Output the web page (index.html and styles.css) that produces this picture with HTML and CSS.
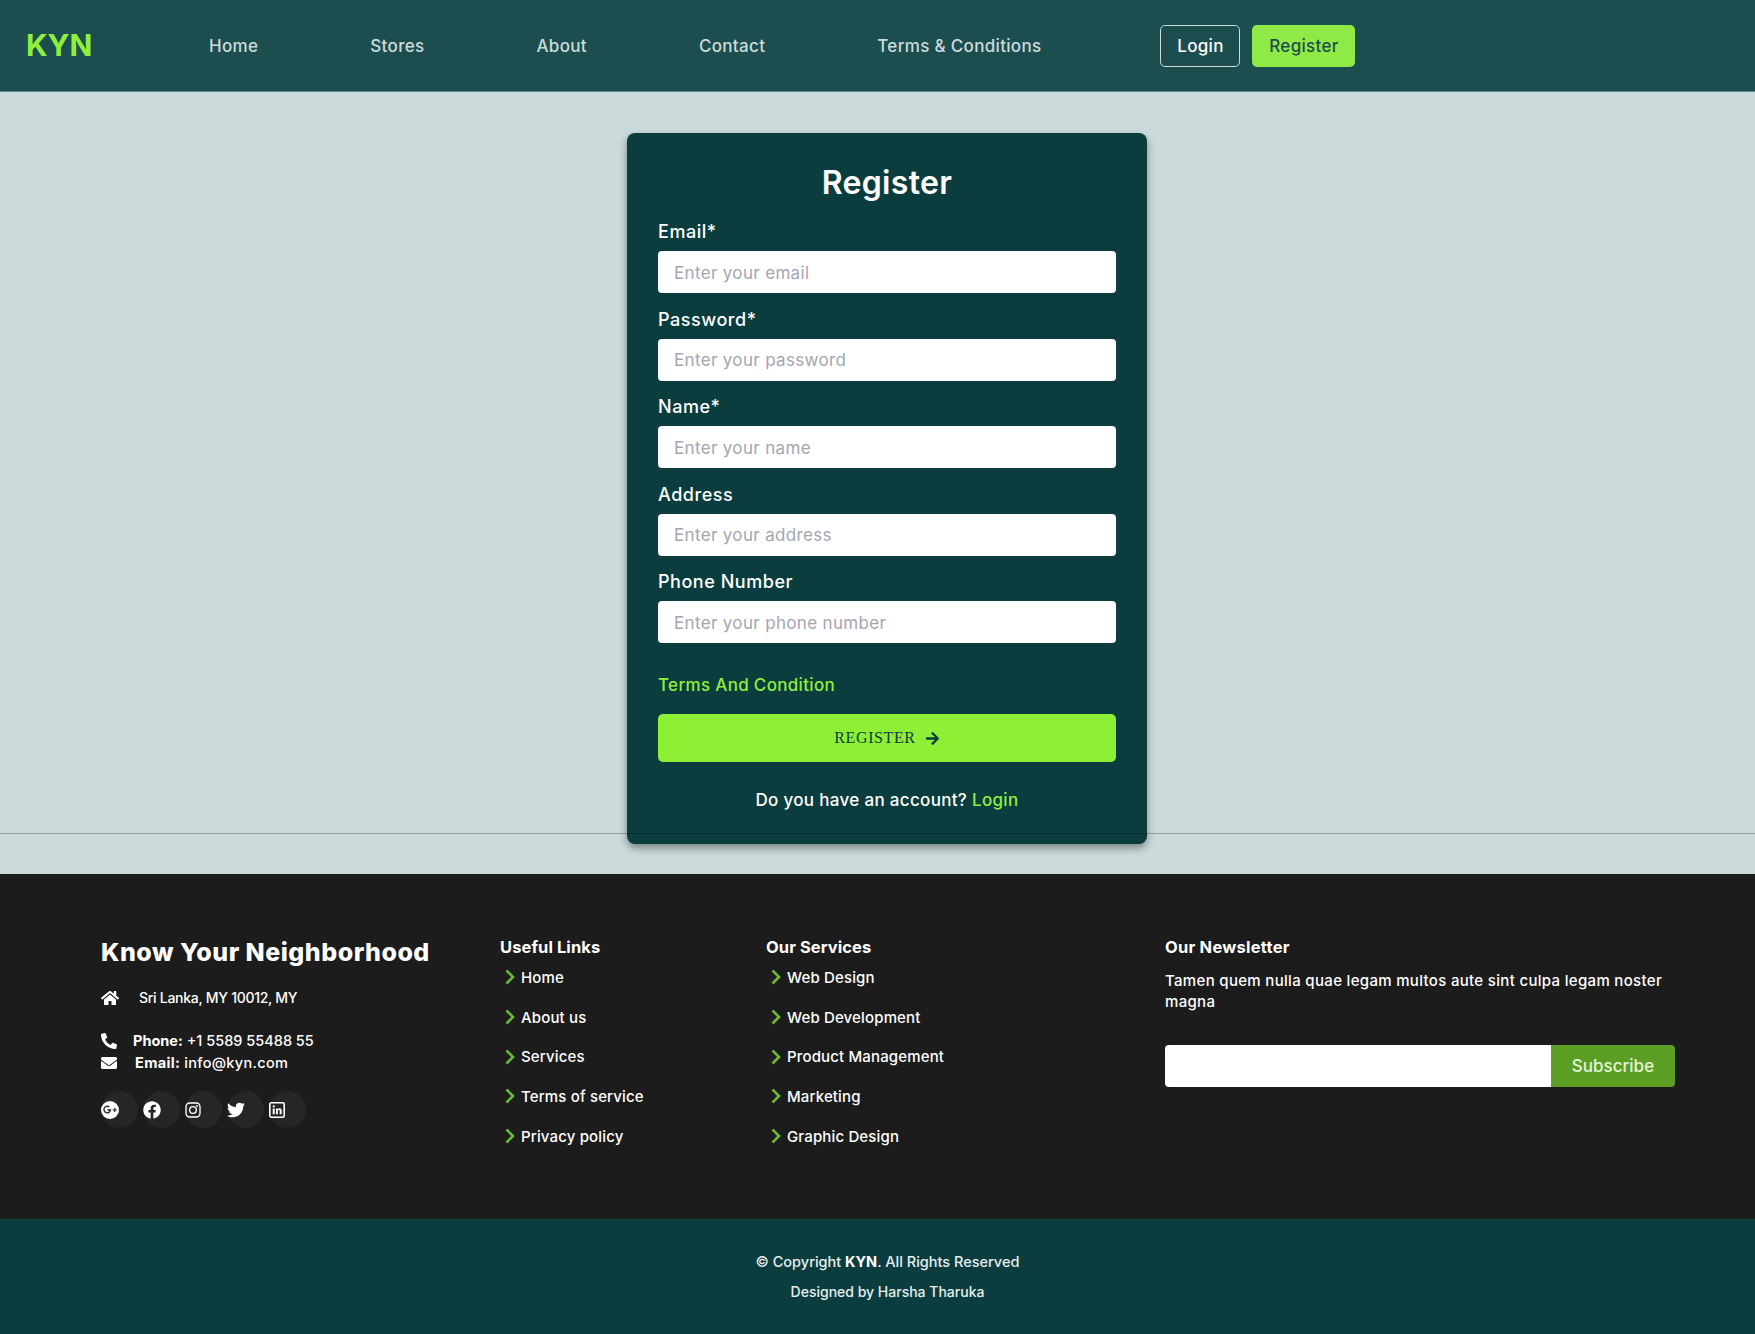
FILE: index.html

```html
<!DOCTYPE html>
<html lang="en">
<head>
  <meta charset="UTF-8" />
  <title>KYN - Register</title>
  <link rel="stylesheet" href="styles.css">
</head>
<body>
  <header class="navbar">
    <a class="logo" href="#">KYN</a>
    <ul class="nav-links">
      <li><a href="#">Home</a></li>
      <li><a href="#">Stores</a></li>
      <li><a href="#">About</a></li>
      <li><a href="#">Contact</a></li>
      <li><a href="#">Terms &amp; Conditions</a></li>
    </ul>
    <div class="nav-buttons">
      <a class="btn-login" href="#">Login</a>
      <a class="btn-register" href="#">Register</a>
    </div>
  </header>

  <main class="page">
    <form class="card">
      <h1>Register</h1>
      <div class="field">
        <label>Email*</label>
        <input type="text" placeholder="Enter your email" />
      </div>
      <div class="field">
        <label>Password*</label>
        <input type="text" placeholder="Enter your password" />
      </div>
      <div class="field">
        <label>Name*</label>
        <input type="text" placeholder="Enter your name" />
      </div>
      <div class="field">
        <label>Address</label>
        <input type="text" placeholder="Enter your address" />
      </div>
      <div class="field">
        <label>Phone Number</label>
        <input type="text" placeholder="Enter your phone number" />
      </div>
      <a class="terms" href="#">Terms And Condition</a>
      <button class="submit" type="button">REGISTER
        <svg class="arrow" viewBox="0 0 448 512"><path d="M190.5 66.9l22.2-22.2c9.4-9.4 24.6-9.4 33.9 0L441 239c9.4 9.4 9.4 24.6 0 33.9L246.6 467.3c-9.4 9.4-24.6 9.4-33.9 0l-22.2-22.2c-9.5-9.5-9.3-25 .4-34.3L311.4 296H24c-13.3 0-24-10.7-24-24v-32c0-13.3 10.7-24 24-24h287.4L190.9 101.2c-9.8-9.3-10-24.8-.4-34.3z"/></svg>
      </button>
      <p class="have-account">Do you have an account? <a href="#">Login</a></p>
    </form>
    <hr class="divider">
  </main>

  <footer class="footer">
    <div class="footer-grid">
      <div class="contact">
        <h3>Know Your Neighborhood</h3>
        <p class="address">
          <svg class="home-icon" viewBox="0 0 576 512"><path d="M280.37 148.26L96 300.11V464a16 16 0 0 0 16 16l112.06-.29a16 16 0 0 0 15.92-16V368a16 16 0 0 1 16-16h64a16 16 0 0 1 16 16v95.64a16 16 0 0 0 16 16.05L464 480a16 16 0 0 0 16-16V300L295.67 148.26a12.19 12.19 0 0 0-15.3 0zM571.6 251.47L488 182.56V44.05a12 12 0 0 0-12-12h-56a12 12 0 0 0-12 12v72.61L318.47 43a48 48 0 0 0-61 0L4.34 251.47a12 12 0 0 0-1.6 16.9l25.5 31A12 12 0 0 0 45.15 301l235.22-193.74a12.19 12.19 0 0 1 15.3 0L530.9 301a12 12 0 0 0 16.9-1.6l25.5-31a12 12 0 0 0-1.7-16.93z"/></svg>
          Sri Lanka, MY 10012, MY
        </p>
        <p class="phone">
          <svg class="line-icon" viewBox="0 0 512 512"><path d="M497.39 361.8l-112-48a24 24 0 0 0-28 6.9l-49.6 60.6A370.66 370.66 0 0 1 130.6 204.11l60.6-49.6a23.94 23.94 0 0 0 6.9-28l-48-112A24.16 24.16 0 0 0 122.6.61l-104 24A24 24 0 0 0 0 48c0 256.5 207.9 464 464 464a24 24 0 0 0 23.4-18.6l24-104a24.29 24.29 0 0 0-14.01-27.6z"/></svg>
          <span><b>Phone:</b> +1 5589 55488 55</span>
        </p>
        <p class="email">
          <svg class="line-icon" viewBox="0 0 512 512"><path d="M502.3 190.8c3.9-3.1 9.7-.2 9.7 4.7V400c0 26.5-21.5 48-48 48H48c-26.5 0-48-21.5-48-48V195.6c0-5 5.7-7.8 9.7-4.7 22.4 17.4 52.1 39.5 154.1 113.6 21.1 15.4 56.7 47.8 92.2 47.6 35.7.3 72-32.8 92.3-47.6 102-74.1 131.6-96.3 154-113.7zM256 320c23.2.4 56.6-29.2 73.4-41.4 132.7-96.3 142.8-104.7 173.4-128.7 5.8-4.5 9.2-11.5 9.2-18.9v-19c0-26.5-21.5-48-48-48H48C21.5 64 0 85.5 0 112v19c0 7.4 3.4 14.3 9.2 18.9 30.6 23.9 40.7 32.4 173.4 128.7 16.8 12.2 50.2 41.8 73.4 41.4z"/></svg>
          <span><b>Email:</b> info@kyn.com</span>
        </p>
        <div class="socials">
          <a href="#"><svg viewBox="0 0 24 24"><circle cx="12" cy="12" r="12" fill="#fff"/><path d="M11 7.9A4.4 4.4 0 1 0 12.7 12H8.6" fill="none" stroke="#262626" stroke-width="1.8"/><path d="M15.6 12h5.4M18.3 9.3v5.4" fill="none" stroke="#262626" stroke-width="1.6"/></svg></a>
          <a href="#"><svg viewBox="0 0 512 512"><path fill="#fff" d="M504 256C504 119 393 8 256 8S8 119 8 256c0 123.78 90.69 226.38 209.25 245V327.69h-63V256h63v-54.64c0-62.15 37-96.48 93.67-96.48 27.14 0 55.52 4.84 55.52 4.84v61h-31.28c-30.8 0-40.41 19.12-40.41 38.73V256h68.78l-11 71.69h-57.78V501C413.31 482.38 504 379.78 504 256z"/></svg></a>
          <a href="#"><svg class="small" viewBox="0 0 24 24"><rect x="1.5" y="1.5" width="21" height="21" rx="5.5" fill="none" stroke="#fff" stroke-width="2"/><circle cx="12" cy="12" r="5" fill="none" stroke="#fff" stroke-width="2"/><circle cx="18" cy="6" r="1.4" fill="#fff"/></svg></a>
          <a href="#"><svg viewBox="0 0 512 512"><path fill="#fff" d="M459.37 151.716c.325 4.548.325 9.097.325 13.645 0 138.72-105.583 298.558-298.558 298.558-59.452 0-114.68-17.219-161.137-47.106 8.447.974 16.568 1.299 25.34 1.299 49.055 0 94.213-16.568 130.274-44.832-46.132-.975-84.792-31.188-98.112-72.772 6.498.974 12.995 1.624 19.818 1.624 9.421 0 18.843-1.3 27.614-3.573-48.081-9.747-84.143-51.98-84.143-102.985v-1.299c13.969 7.797 30.214 12.67 47.431 13.319-28.264-18.843-46.781-51.005-46.781-87.391 0-19.492 5.197-37.36 14.294-52.954 51.655 63.675 129.3 105.258 216.365 109.807-1.624-7.797-2.599-15.918-2.599-24.04 0-57.828 46.782-104.934 104.934-104.934 30.213 0 57.502 12.67 76.67 33.137 23.715-4.548 46.456-13.32 66.599-25.34-7.798 24.366-24.366 44.833-46.132 57.827 21.117-2.273 41.584-8.122 60.426-16.243-14.292 20.791-32.161 39.308-52.628 54.253z"/></svg></a>
          <a href="#"><svg class="small" viewBox="0 0 24 24"><rect x="1.2" y="1.2" width="21.6" height="21.6" rx="2.2" fill="none" stroke="#fff" stroke-width="2.4"/><path fill="#fff" d="M5.6 9.6h3v8.8h-3zM7.1 5a1.7 1.7 0 1 1 0 3.4 1.7 1.7 0 0 1 0-3.4zM10.4 9.6h2.8v1.2c.6-.9 1.5-1.4 2.8-1.4 2.2 0 3 1.4 3 3.8v5.2h-3v-4.6c0-1.2-.4-1.9-1.3-1.9-1.1 0-1.4.8-1.4 2v4.5h-2.9z"/></svg></a>
        </div>
      </div>

      <div class="link-col">
        <h4>Useful Links</h4>
        <ul>
          <li><svg class="chev" viewBox="0 0 10 16"><path d="M1.5 1.5L8 8l-6.5 6.5"/></svg><a href="#">Home</a></li>
          <li><svg class="chev" viewBox="0 0 10 16"><path d="M1.5 1.5L8 8l-6.5 6.5"/></svg><a href="#">About us</a></li>
          <li><svg class="chev" viewBox="0 0 10 16"><path d="M1.5 1.5L8 8l-6.5 6.5"/></svg><a href="#">Services</a></li>
          <li><svg class="chev" viewBox="0 0 10 16"><path d="M1.5 1.5L8 8l-6.5 6.5"/></svg><a href="#">Terms of service</a></li>
          <li><svg class="chev" viewBox="0 0 10 16"><path d="M1.5 1.5L8 8l-6.5 6.5"/></svg><a href="#">Privacy policy</a></li>
        </ul>
      </div>

      <div class="link-col">
        <h4>Our Services</h4>
        <ul>
          <li><svg class="chev" viewBox="0 0 10 16"><path d="M1.5 1.5L8 8l-6.5 6.5"/></svg><a href="#">Web Design</a></li>
          <li><svg class="chev" viewBox="0 0 10 16"><path d="M1.5 1.5L8 8l-6.5 6.5"/></svg><a href="#">Web Development</a></li>
          <li><svg class="chev" viewBox="0 0 10 16"><path d="M1.5 1.5L8 8l-6.5 6.5"/></svg><a href="#">Product Management</a></li>
          <li><svg class="chev" viewBox="0 0 10 16"><path d="M1.5 1.5L8 8l-6.5 6.5"/></svg><a href="#">Marketing</a></li>
          <li><svg class="chev" viewBox="0 0 10 16"><path d="M1.5 1.5L8 8l-6.5 6.5"/></svg><a href="#">Graphic Design</a></li>
        </ul>
      </div>

      <div class="newsletter">
        <h4>Our Newsletter</h4>
        <p>Tamen quem nulla quae legam multos aute sint culpa legam noster magna</p>
        <div class="subscribe">
          <input type="text" />
          <button type="button">Subscribe</button>
        </div>
      </div>
    </div>
  </footer>

  <div class="copyright">
    <p class="copy-line">&copy; Copyright <b>KYN</b>. All Rights Reserved</p>
    <p class="credit">Designed by Harsha Tharuka</p>
  </div>
</body>
</html>
```

FILE: styles.css

```css
* {
  box-sizing: border-box;
}
body {
  margin: 0;
  font-family: Inter, "Noto Sans", sans-serif;
  letter-spacing: 0.02em;
  background-color: #cbdbdb;
  color: #fff;
}
a {
  text-decoration: none;
  color: inherit;
}
p, h1, h3, h4, ul {
  margin: 0;
  padding: 0;
}
ul {
  list-style: none;
}

/* navbar */
.navbar {
  display: flex;
  align-items: center;
  height: 92px;
  padding-left: 26px;
  background-color: #1d4e4f;
  border-bottom: 1px solid #5d8a8a;
}
.logo {
  width: 65px;
  margin-bottom: 2px;
  font-size: 30px;
  font-weight: 700;
  letter-spacing: 0;
  color: #8ef03a;
}
.nav-links {
  display: flex;
  gap: 112px;
  margin-left: 118px;
  font-size: 17px;
  font-weight: 500;
  color: #cbdbdb;
}
.nav-buttons {
  display: flex;
  gap: 12px;
  margin-left: 119px;
  font-size: 17px;
  font-weight: 500;
}
.btn-login, .btn-register {
  display: flex;
  align-items: center;
  justify-content: center;
  height: 42px;
  border-radius: 5px;
}
.btn-login {
  width: 80px;
  border: 1px solid #cbdbdb;
}
.btn-register {
  width: 103px;
  background-color: #90ea45;
  color: #1d4e4f;
}

/* register card */
.page {
  padding-top: 41px;
  padding-left: 19px;
  height: 782px;
}
.card {
  width: 520px;
  height: 711px;
  margin: 0 auto -11px;
  padding: 31px;
  border-radius: 8px;
  background-color: #0b3d3f;
  box-shadow: 0 4px 8px rgba(0, 0, 0, 0.4);
}
.card h1 {
  height: 38px;
  margin-bottom: 18px;
  font-size: 32px;
  line-height: 38px;
  font-weight: 600;
  text-align: center;
}
.field {
  margin-bottom: 14.5px;
}
.field label {
  display: block;
  height: 24px;
  margin-bottom: 7px;
  font-size: 18px;
  line-height: 24px;
  font-weight: 500;
  letter-spacing: 0.03em;
}
.field input {
  display: block;
  width: 100%;
  height: 42px;
  padding: 1px 16px 0;
  border: 0;
  border-radius: 4px;
  background-color: #fff;
  font-family: inherit;
  font-size: 17px;
  letter-spacing: 0.02em;
}
.field input::placeholder {
  color: #a5a5b2;
}
.terms {
  display: block;
  margin-top: 30px;
  font-size: 17px;
  line-height: 24px;
  font-weight: 500;
  color: #8ef03a;
}
.submit {
  display: flex;
  align-items: center;
  justify-content: center;
  gap: 9px;
  width: 100%;
  height: 48px;
  margin-top: 17px;
  border: 0;
  border-radius: 5px;
  background-color: #8ef035;
  color: #0b3d3f;
  font-family: "Liberation Serif", serif;
  font-size: 16px;
  letter-spacing: 0.038em;
}
.arrow {
  width: 15px;
  height: 15px;
  fill: #0b3d3f;
}
.have-account {
  margin-top: 26px;
  font-size: 17px;
  line-height: 24px;
  font-weight: 500;
  text-align: center;
}
.have-account a {
  color: #8ef03a;
}
.divider {
  margin: 0 0 0 -19px;
  border: 0;
  border-top: 1px solid rgba(0, 0, 0, 0.25);
}

/* footer */
.footer {
  height: 345px;
  padding: 58px 80px 0 101px;
  background-color: #1c1c1c;
}
.footer-grid {
  display: grid;
  grid-template-columns: 399px 266px 399px 1fr;
  align-items: start;
}
.contact h3 {
  font-size: 25px;
  line-height: 40px;
  font-weight: 800;
  letter-spacing: 0.02em;
}
.address, .phone, .email {
  display: flex;
  align-items: center;
  font-size: 14.5px;
  font-weight: 500;
}
.address {
  margin-top: 14px;
  line-height: 24px;
  font-size: 14px;
  letter-spacing: -0.02em;
}
.home-icon {
  width: 18px;
  height: 16px;
  margin-right: 20px;
  fill: #fff;
}
.phone {
  margin-top: 20px;
  line-height: 22px;
  letter-spacing: 0;
}
.email {
  line-height: 22px;
}
.line-icon {
  width: 16px;
  height: 16px;
  fill: #fff;
}
.phone .line-icon {
  margin-right: 16px;
}
.email .line-icon {
  margin-right: 18px;
}
.contact b {
  font-weight: 700;
}
.socials {
  display: flex;
  gap: 5px;
  margin-top: 17px;
}
.socials a {
  display: flex;
  align-items: center;
  width: 37px;
  height: 37px;
  border-radius: 50%;
  background-color: #262626;
}
.socials svg {
  width: 18px;
  height: 18px;
}
.socials svg.small {
  width: 16px;
  height: 16px;
}
.link-col h4, .newsletter h4 {
  margin-top: 2.5px;
  font-size: 16.5px;
  line-height: 24px;
  font-weight: 700;
  letter-spacing: 0.005em;
}
.newsletter h4 {
  letter-spacing: 0.015em;
}
.link-col ul {
  margin-top: -1px;
}
.link-col li {
  display: flex;
  align-items: center;
  height: 39.7px;
  padding-left: 5px;
  font-size: 15px;
  font-weight: 500;
  letter-spacing: 0.01em;
}
.chev {
  width: 10px;
  height: 16px;
  margin-right: 6px;
  fill: none;
  stroke: #6cbb33;
  stroke-width: 2.6;
}
.newsletter p {
  margin-top: 11px;
  font-size: 15px;
  line-height: 21px;
  font-weight: 500;
}
.subscribe {
  display: flex;
  height: 42px;
  margin-top: 33px;
}
.subscribe input {
  flex: 1;
  min-width: 0;
  border: 0;
  border-radius: 4px 0 0 4px;
  background-color: #fff;
}
.subscribe button {
  width: 124px;
  border: 0;
  border-radius: 0 4px 4px 0;
  background-color: #5c9e24;
  color: #e2f5d5;
  font-family: inherit;
  font-size: 17px;
  font-weight: 500;
}

/* bottom bar */
.copyright {
  height: 115px;
  padding-top: 31px;
  padding-left: 20px;
  background-color: #0b3d3f;
  text-align: center;
  color: #e6efef;
  letter-spacing: 0;
}
.copy-line {
  font-size: 14.5px;
  line-height: 24px;
  font-weight: 500;
}
.copy-line b {
  color: #fff;
  font-weight: 700;
}
.credit {
  margin-top: 6px;
  font-size: 14px;
  line-height: 24px;
  font-weight: 500;
}
```
